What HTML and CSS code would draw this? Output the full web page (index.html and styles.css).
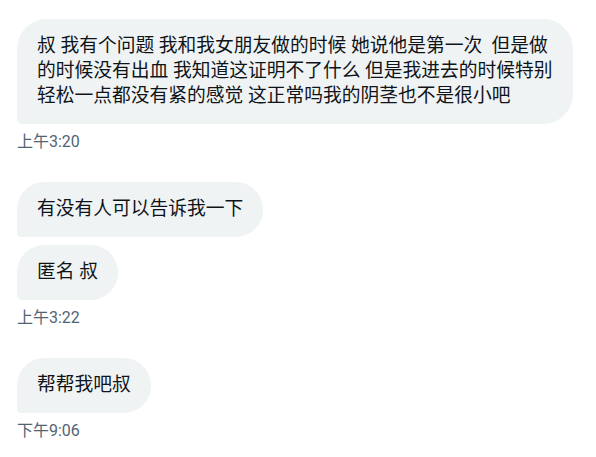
FILE: index.html
```html
<!DOCTYPE html>
<html lang="zh-CN">
<head>
<meta charset="utf-8">
<title>Messages</title>
<link rel="stylesheet" href="styles.css">
</head>
<body>
<div class="thread">
  <div class="group">
    <div class="bubble wide">叔 我有个问题 我和我女朋友做的时候 她说他是第一次&nbsp; 但是做的时候没有出血 我知道这证明不了什么 但是我进去的时候特别轻松一点都没有紧的感觉 这正常吗我的阴茎也不是很小吧</div>
    <div class="time">上午3:20</div>
  </div>
  <div class="group">
    <div class="bubble">有没有人可以告诉我一下</div>
    <div class="bubble">匿名 叔</div>
    <div class="time">上午3:22</div>
  </div>
  <div class="group">
    <div class="bubble">帮帮我吧叔</div>
    <div class="time">下午9:06</div>
  </div>
</div>
</body>
</html>
```
FILE: styles.css
```css
html, body {
  margin: 0;
  padding: 0;
  background: #ffffff;
}
body {
  font-family: Roboto, "Noto Sans CJK SC", sans-serif;
  color: #0f1419;
}
.thread {
  display: flex;
  flex-direction: column;
  gap: 30px;
  padding: 19px 0 0 17px;
}
.group {
  display: flex;
  flex-direction: column;
  align-items: flex-start;
  gap: 8px;
}
.bubble {
  box-sizing: border-box;
  max-width: 556px;
  background: #eff3f4;
  border-radius: 30px 30px 30px 5px;
  padding: 15px 20px;
  font-size: 18.75px;
  line-height: 25px;
}
.wide {
  width: 556px;
  padding-right: 14px;
}
.time {
  margin-top: 0;
  font-size: 16px;
  line-height: 20px;
  color: #536471;
}
```
